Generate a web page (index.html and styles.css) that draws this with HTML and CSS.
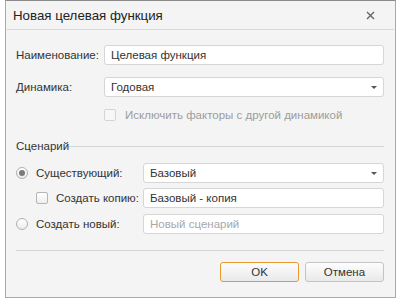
FILE: index.html
```html
<!DOCTYPE html>
<html lang="ru">
<head>
  <meta charset="UTF-8" />
  <title>Новая целевая функция</title>
  <link rel="stylesheet" href="styles.css">
</head>
<body>
  <div class="dialog">
    <div class="dialog-header">
      <span class="dialog-title">Новая целевая функция</span>
      <svg class="close-icon" width="9" height="9" viewBox="0 0 9 9">
        <path d="M1 1 L8 8 M8 1 L1 8" stroke="#666" stroke-width="1.4" fill="none"/>
      </svg>
    </div>

    <div class="dialog-body">
      <div class="row row-name">
        <label class="label label-short">Наименование:</label>
        <div class="field">Целевая функция</div>
      </div>
      <div class="row row-dyn">
        <label class="label label-short">Динамика:</label>
        <div class="field select">Годовая<span class="arrow"></span></div>
      </div>
      <div class="row row-exclude">
        <span class="checkbox disabled"></span>
        <span class="text-disabled">Исключить факторы с другой динамикой</span>
      </div>

      <div class="group-title">
        <span>Сценарий</span>
        <span class="group-line"></span>
      </div>

      <div class="row row-existing">
        <div class="label label-long">
          <span class="radio checked"></span>
          <span>Существующий:</span>
        </div>
        <div class="field select">Базовый<span class="arrow"></span></div>
      </div>
      <div class="row row-copy">
        <div class="label label-long indent">
          <span class="checkbox"></span>
          <span>Создать копию:</span>
        </div>
        <div class="field">Базовый - копия</div>
      </div>
      <div class="row row-new">
        <div class="label label-long">
          <span class="radio"></span>
          <span>Создать новый:</span>
        </div>
        <div class="field placeholder">Новый сценарий</div>
      </div>

      <div class="separator"></div>

      <div class="footer">
        <button class="btn btn-primary">OK</button>
        <button class="btn">Отмена</button>
      </div>
    </div>
  </div>
</body>
</html>
```

FILE: styles.css
```css
* {
  box-sizing: border-box;
}
html, body {
  margin: 0;
  padding: 0;
  background: #ffffff;
  font-family: "Liberation Sans", Arial, sans-serif;
  font-size: 11.5px;
  color: #333;
}
body {
  padding: 0 4px 0 5px;
}
.dialog {
  height: 298px;
  background: #f4f4f4;
  border: 1px solid #a9a9a9;
  border-top-color: #8a8a8a;
  white-space: nowrap;
}
.dialog-header {
  height: 29px;
  margin: 0 1px;
  border-bottom: 1px solid #d8d8d8;
  display: flex;
  align-items: center;
  justify-content: space-between;
  padding: 0 19px 0 6px;
}
.dialog-title {
  font-size: 13.3px;
  color: #222;
}
.close-icon {
  display: block;
}
.dialog-body {
  padding: 15px 11px 0 10px;
}
.row {
  display: flex;
  align-items: center;
  height: 20px;
}
.row-dyn {
  margin-top: 12px;
}
.row-exclude {
  margin-top: 8px;
  padding-left: 88px;
  gap: 9px;
}
.row-existing {
  margin-top: 10px;
}
.row-copy {
  margin-top: 5px;
}
.row-new {
  margin-top: 6px;
}
.label {
  flex: none;
  display: flex;
  align-items: center;
  gap: 8px;
  color: #333;
}
.label-short {
  width: 88px;
}
.label-long {
  width: 127px;
}
.indent {
  padding-left: 20px;
}
.field {
  flex: 1;
  height: 20px;
  background: #fff;
  border: 1px solid #d6d6d6;
  border-radius: 3px;
  padding: 0 6px;
  display: flex;
  align-items: center;
  color: #333;
  position: relative;
}
.field.placeholder {
  color: #a8a8a8;
}
.arrow {
  position: absolute;
  right: 6px;
  top: 8px;
  width: 0;
  height: 0;
  border-left: 3px solid transparent;
  border-right: 3px solid transparent;
  border-top: 3px solid #555;
}
.checkbox {
  flex: none;
  width: 12px;
  height: 12px;
  border: 1px solid #b5b5b5;
  border-radius: 2px;
  background: linear-gradient(#ffffff, #eeeeee);
}
.checkbox.disabled {
  border-color: #d4d4d4;
  background: #f7f7f7;
}
.text-disabled {
  color: #9c9c9c;
}
.radio {
  flex: none;
  width: 12px;
  height: 12px;
  border: 1px solid #b0b0b0;
  border-radius: 50%;
  background: linear-gradient(#ffffff, #ececec);
  display: flex;
  align-items: center;
  justify-content: center;
}
.radio.checked::after {
  content: "";
  width: 6px;
  height: 6px;
  border-radius: 50%;
  background: #7a7a7a;
}
.group-title {
  margin-top: 14px;
  height: 14px;
  display: flex;
  align-items: center;
  color: #333;
}
.group-line {
  flex: 1;
  height: 1px;
  background: #d6d6d6;
}
.separator {
  margin-top: 16px;
  height: 1px;
  background: #d6d6d6;
}
.footer {
  margin-top: 11px;
  display: flex;
  justify-content: flex-end;
  gap: 6px;
}
.btn {
  width: 79px;
  height: 20px;
  padding: 0;
  font-family: inherit;
  font-size: 11.5px;
  color: #333;
  background: linear-gradient(#fdfdfd, #e9e9e9);
  border: 1px solid #c4c4c4;
  border-radius: 3px;
}
.btn-primary {
  border-color: #e49a2e;
}
```
